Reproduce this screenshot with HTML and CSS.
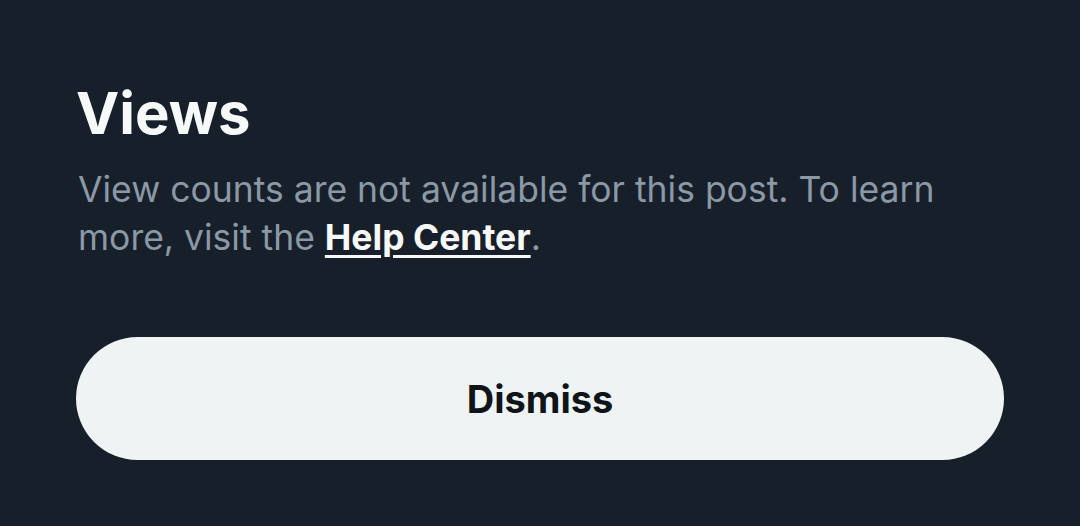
FILE: index.html
```html
<!DOCTYPE html>
<html lang="en">
<head>
<meta charset="utf-8">
<link rel="stylesheet" href="styles.css">
<title>Views</title>
</head>
<body>
<div class="sheet">
  <h1 class="title">Views</h1>
  <p class="desc">View counts are not available for this post. To learn more, visit the <a class="link" href="#">Help Center</a>.</p>
  <button class="dismiss">Dismiss</button>
</div>
</body>
</html>
```
FILE: styles.css
```css
html, body {
  margin: 0;
  padding: 0;
  background: #17202a;
  height: 100%;
}
body {
  font-family: Inter, "Liberation Sans", sans-serif;
}
.sheet {
  display: flex;
  flex-direction: column;
  padding: 77px 76px 0 76px;
}
.title {
  margin: 0;
  color: #f7f9f9;
  font-size: 58px;
  font-weight: 700;
  line-height: 72px;
  letter-spacing: 0;
}
.desc {
  margin: 17px 0 0 2px;
  color: #8b98a5;
  font-size: 35.5px;
  line-height: 48px;
  font-weight: 400;
  max-width: 880px;
}
.link {
  color: #f7f9f9;
  font-weight: 700;
  text-decoration: underline;
  text-decoration-thickness: 3px;
  text-underline-offset: 5px;
}
.dismiss {
  margin-top: 75px;
  height: 123px;
  width: 928px;
  border: none;
  border-radius: 62px;
  background: #eff3f4;
  color: #0f1419;
  font-family: Inter, "Liberation Sans", sans-serif;
  font-size: 38px;
  font-weight: 700;
}
```
